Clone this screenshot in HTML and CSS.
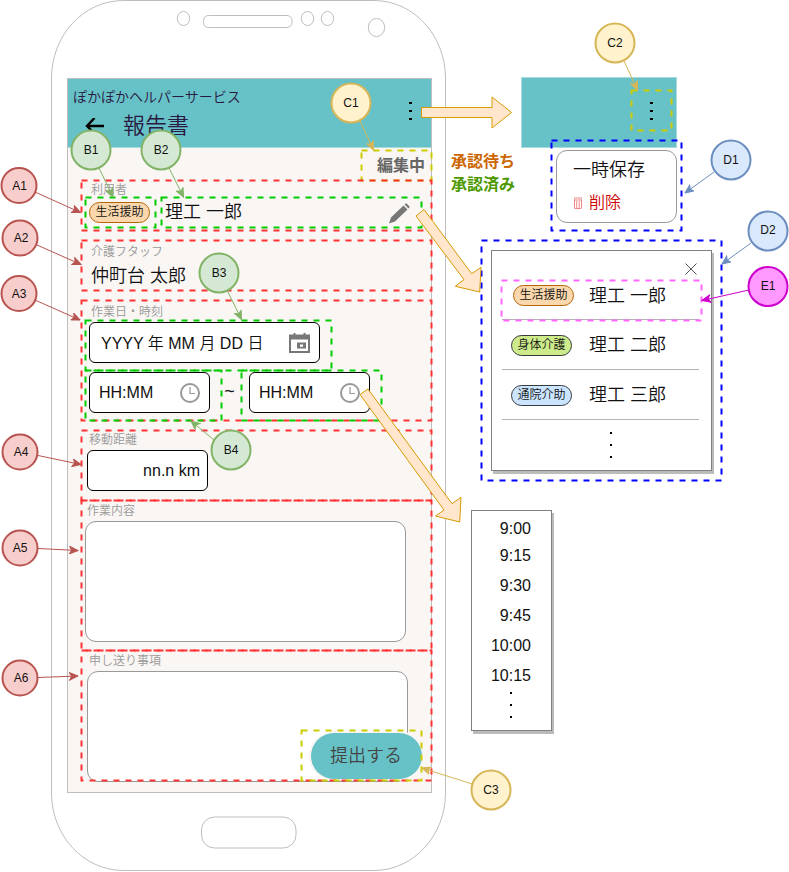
FILE: index.html
```html
<!DOCTYPE html>
<html lang="ja">
<head>
<meta charset="utf-8">
<title>報告書</title>
<link rel="stylesheet" href="styles.css">
</head>
<body>
<main class="canvas">
  <section class="phone">
    <svg class="phone-parts" viewBox="0 0 395 872" width="395" height="872">
      <path d="M72.500 .5H323C363 .5 394.500 36 394.500 78V793C394.500 835 363 870.500 323 870.500H72.500C32 870.500 .5 835 .5 793V78C.5 36 32 .5 72.500 .5Z"/>
      <ellipse cx="132.500" cy="18.500" rx="6.200" ry="7"/>
      <rect x="152.500" y="15.500" width="88.500" height="12" rx="5"/>
      <ellipse cx="256.500" cy="18.500" rx="6.200" ry="7"/>
      <ellipse cx="276.500" cy="18.500" rx="6.200" ry="7"/>
      <ellipse cx="325.500" cy="27.500" rx="8.200" ry="9"/>
      <rect x="150.500" y="817" width="94.500" height="31" rx="13"/>
    </svg>
    <div class="screen">
      <header class="app-bar">
        <div class="service">ぽかぽかヘルパーサービス</div>
        <div class="title-row">
          <svg class="back" width="20" height="16" viewBox="0 0 20 16"><path d="M19 8H2.500M9.500 0L2 8L9.500 15.500"/></svg>
          <h1>報告書</h1>
        </div>
        <div class="dots bar-dots"><i></i><i></i><i></i></div>
      </header>
      <div class="status">編集中</div>
      <section class="block user">
        <div class="label">利用者</div>
        <div class="user-row">
          <span class="tag orange">生活援助</span>
          <span class="name">理工 一郎</span>
          <svg class="pencil" width="21" height="21" viewBox="0 0 21 21"><path d="M0 20.500L2 14.500L14.500 2.500L18.500 6.500L6 18.500ZM15.500 1.600L17.300 .2L20.800 3.700L19.500 5.500Z"/></svg>
        </div>
      </section>
      <section class="block staff">
        <div class="label">介護フタッフ</div>
        <div class="name">仲町台 太郎</div>
      </section>
      <section class="block date">
        <div class="label">作業日・時刻</div>
        <div class="field date-field">
          <span>YYYY 年 MM 月 DD 日</span>
          <svg width="21" height="20" viewBox="0 0 21 20"><path fill="#777" fill-rule="evenodd" d="M0 1.500H4.500V0H6.500V1.500H14.500V0H16.500V1.500H21V20H0ZM2 6.500V18H19V6.500ZM8 9.500H17V15.500H8ZM11 11.500V13.700H14V11.500Z"/></svg>
        </div>
        <div class="times">
          <div class="field time-field"><span>HH:MM</span><svg class="clock" width="20" height="20" viewBox="0 0 20 20"><circle cx="10" cy="10" r="9"/><path d="M10 4V10.500H15"/></svg></div>
          <span class="tilde">~</span>
          <div class="field time-field"><span>HH:MM</span><svg class="clock" width="20" height="20" viewBox="0 0 20 20"><circle cx="10" cy="10" r="9"/><path d="M10 4V10.500H15"/></svg></div>
        </div>
      </section>
      <section class="block distance">
        <div class="label">移動距離</div>
        <div class="field km-field">nn.n km</div>
      </section>
      <section class="block work">
        <div class="label">作業内容</div>
        <div class="area"></div>
      </section>
      <section class="block notes">
        <div class="label">申し送り事項</div>
        <div class="area short"></div>
      </section>
      <div class="submit">提出する</div>
    </div>
  </section>

  <div class="states"><div class="waiting">承認待ち</div><div class="approved">承認済み</div></div>

  <div class="bar-sample"><div class="dots"><i></i><i></i><i></i></div></div>
  <div class="menu">
    <div>一時保存</div>
    <div class="delete"><svg width="8" height="12" viewBox="0 0 8 12"><path d="M0 1H8V3H0Z"/><path d="M.5 3V11.500M7.500 3V11.500M2.700 4V11.500M5.200 4V11.500M1 11.500H7"/></svg>削除</div>
  </div>

  <section class="picker">
    <svg class="close" width="12" height="12" viewBox="0 0 12 12"><path d="M.5 .5L11.500 11.500M11.500 .5L.5 11.500"/></svg>
    <div class="person first"><span class="tag orange">生活援助</span><span class="name">理工 一郎</span></div>
    <div class="person"><span class="tag green">身体介護</span><span class="name">理工 二郎</span></div>
    <div class="person"><span class="tag blue">通院介助</span><span class="name">理工 三郎</span></div>
    <div class="dots wide"><i></i><i></i><i></i></div>
  </section>

  <section class="time-list">
    <div>9:00</div><div>9:15</div><div>9:30</div><div>9:45</div><div>10:00</div><div>10:15</div>
    <div class="dots wide"><i></i><i></i><i></i></div>
  </section>

  <svg class="notes-layer" width="789" height="872" viewBox="0 0 789 872">
    <defs>
      <marker id="head" viewBox="0 0 9 8" refX="8.500" refY="4" markerWidth="9.500" markerHeight="8.500" orient="auto" markerUnits="userSpaceOnUse"><path d="M.5 .5L8.500 4L.5 7.500L2.500 4Z" fill="context-stroke" stroke="context-stroke"/></marker>
    </defs>
    <g class="frames">
      <g class="yellow">
        <rect x="361.500" y="150.500" width="70" height="30"/>
        <rect x="631.500" y="90.500" width="40" height="40"/>
      </g>
      <g class="red">
        <rect x="81.500" y="180.500" width="350" height="50"/>
        <rect x="81.500" y="240.500" width="350" height="50"/>
        <rect x="81.500" y="300.500" width="350" height="120"/>
        <rect x="81.500" y="430.500" width="350" height="70"/>
        <rect x="81.500" y="500.500" width="350" height="150"/>
        <rect x="81.500" y="650.500" width="350" height="130"/>
      </g>
      <g class="lime">
        <rect x="85.500" y="197.500" width="70" height="30"/>
        <rect x="161.500" y="197.500" width="260" height="30"/>
        <rect x="85.500" y="320.500" width="246" height="50"/>
        <rect x="85.500" y="370.500" width="136" height="50"/>
        <rect x="241.500" y="370.500" width="140" height="50"/>
      </g>
      <g class="yellow"><rect x="301.500" y="730.500" width="120" height="50"/></g>
      <g class="navy">
        <rect x="551.500" y="140.500" width="130" height="90"/>
        <rect x="481.500" y="240.500" width="240" height="240"/>
      </g>
      <g class="pink"><rect x="501.500" y="280.500" width="200" height="40"/></g>
    </g>
    <g class="block-arrows">
      <path d="M421.500 107.500H492V97L511.500 112.500L492 128V117.500H421.500Z"/>
      <path d="M416 216L424 209.500L471.700 273.700L481 267.300L479.700 292L455.300 286.300L464 279.500Z"/>
      <path d="M360 394.500L368 389L452 503.700L461 497.300L459.700 522L435.500 516L444 510Z"/>
    </g>
    <g class="pin a">
      <path d="M36 192.500L80.500 212.500"/><circle cx="19" cy="185.500" r="17.500"/><text x="19.500" y="189.500">A1</text>
      <path d="M37 245L81 264.500"/><circle cx="20" cy="238" r="17.500"/><text x="21" y="242">A2</text>
      <path d="M36 300.500L80 320"/><circle cx="19" cy="293.500" r="17.500"/><text x="19" y="297.500">A3</text>
      <path d="M38 455.500L81 464.500"/><circle cx="20" cy="452" r="17.500"/><text x="21" y="456">A4</text>
      <path d="M38 548.500L78 550.500"/><circle cx="20" cy="548" r="17.500"/><text x="20" y="552">A5</text>
      <path d="M38 677.500L78 676"/><circle cx="20" cy="678" r="17.500"/><text x="21" y="682">A6</text>
    </g>
    <g class="pin b">
      <path d="M99 168L113 197"/><circle cx="91" cy="150" r="19.500"/><text x="91" y="154">B1</text>
      <path d="M169 168L183.500 197"/><circle cx="161" cy="150" r="19.500"/><text x="161" y="154">B2</text>
      <path d="M227 290L241.500 319.500"/><circle cx="219" cy="273" r="19.500"/><text x="219" y="277">B3</text>
      <path d="M214 440L191 421"/><circle cx="231" cy="450" r="19.500"/><text x="231" y="454">B4</text>
    </g>
    <g class="pin c">
      <path d="M360 121L373.500 150"/><circle cx="351" cy="103" r="19.500"/><text x="351" y="107">C1</text>
      <path d="M624 61L637.500 90"/><circle cx="615" cy="43" r="19.500"/><text x="615" y="47">C2</text>
      <path d="M472 784L422 768"/><circle cx="491" cy="790" r="19.500"/><text x="491" y="794">C3</text>
    </g>
    <g class="pin d">
      <path d="M714 172L685 193"/><circle cx="731" cy="160" r="19.500"/><text x="731" y="164">D1</text>
      <path d="M751 243L722 264"/><circle cx="768" cy="231" r="19.500"/><text x="768" y="234">D2</text>
    </g>
    <g class="pin e">
      <path d="M749 290L702 300.500"/><circle cx="768" cy="286.500" r="19.500"/><text x="768" y="290">E1</text>
    </g>
  </svg>
</main>
</body>
</html>
```
FILE: styles.css
```css
* { box-sizing: border-box; }
body {
  margin: 0;
  background: #fff;
  color: #111;
  font-family: "Liberation Sans", "Noto Sans CJK JP", sans-serif;
  font-weight: 350;
}
.canvas { position: relative; width: 789px; height: 872px; overflow: hidden; }

/* phone */
.phone { position: absolute; left: 51px; top: 0; width: 395px; height: 872px; padding: 78px 0 0 16px; }
.phone-parts { position: absolute; left: 0; top: 0; fill: none; stroke: #bebebe; }
.screen { position: relative; width: 365px; height: 715px; border: 1px solid #bebebe; background: #faf6f4; }
.app-bar { position: relative; height: 69px; padding: 9px 0 0 5px; background: #67c2c8; color: #29183f; border-bottom: 1px solid #a9dadd; }
.service { font-size: 14px; line-height: 18px; }
.title-row { display: flex; align-items: center; gap: 18px; height: 32px; margin-top: 4px; padding-left: 12px; }
.title-row h1 { margin: 0; font-size: 22px; font-weight: 350; line-height: 32px; }
.back { fill: none; stroke: #000; stroke-width: 2.400; }
.dots { display: flex; flex-direction: column; align-items: center; gap: 6px; }
.dots i { width: 3px; height: 2px; background: #000; }
.dots.wide { gap: 10px; }
.dots.wide i { width: 2px; height: 2px; }
.bar-dots { position: absolute; right: 19px; top: 23px; }
.status { height: 32px; padding: 8px 6px 0 0; text-align: right; font-size: 16px; line-height: 20px; font-weight: 700; color: #666; }

.block { margin-left: 13px; }
.label { height: 18px; padding-left: 10px; font-size: 12px; line-height: 18px; color: #999; }
.name { font-size: 18px; line-height: 26px; white-space: nowrap; }
.user { height: 60px; }
.user .label { padding-top: 1px; }
.user-row { display: flex; align-items: center; height: 27px; padding: 0 21px 0 8px; }
.user-row .name { margin-left: 15px; }
.user-row .tag { position: relative; top: 1px; }
.pencil { margin-left: auto; margin-top: 4px; fill: #777; }
.tag { width: 61px; height: 21px; border: 1px solid #b46504; border-radius: 11px; font-size: 12px; line-height: 18px; text-align: center; flex: none; }
.orange { background: #fad7ac; }
.green { background: #cdeb8b; border-color: #36393d; }
.blue { background: #cce5ff; border-color: #36393d; }
.staff { height: 60px; padding-top: 3px; }
.staff .name { margin-top: 2px; padding-left: 10px; }
.date { height: 130px; padding-top: 3px; }
.field { height: 41px; border: 1px solid #000; border-radius: 6px; background: #fff; display: flex; align-items: center; font-size: 16px; }
.date-field { width: 231px; margin: 1px 0 0 8px; padding: 0 9px 0 11px; justify-content: space-between; }
.date-field span { position: relative; top: -1px; }
.times { display: flex; align-items: center; margin: 9px 0 0 8px; }
.time-field { width: 121px; padding: 0 9px; justify-content: space-between; }
.tilde { width: 39px; padding-bottom: 2px; text-align: center; font-size: 18px; }
.clock { fill: none; stroke: #999; stroke-width: 2; }
.clock path { stroke-width: 1.200; }
.distance { height: 70px; }
.distance .label { padding-left: 8px; padding-top: 1px; }
.km-field { width: 121px; margin: 2px 0 0 6px; padding-right: 7px; justify-content: flex-end; }
.work { height: 150px; }
.work .label { height: 19px; padding: 2px 0 0 6px; }
.area { width: 321px; height: 121px; margin: 2px 0 0 4px; border: 1px solid #999; border-radius: 11px; background: #fff; }
.notes .label { height: 19px; padding: 2px 0 0 8px; }
.area.short { height: 111px; margin-left: 6px; }
.submit { position: absolute; left: 243px; top: 654px; width: 111px; height: 46px; border-radius: 23px; background: #67c2c8; box-shadow: 0 0 0 2px #faf6f4; color: #444; font-size: 18px; line-height: 46px; text-align: center; padding-right: 1px; }

/* status variants */
.states { position: absolute; left: 451px; top: 150px; font-size: 16px; line-height: 23px; font-weight: 700; }
.waiting { color: #cc6600; }
.approved { color: #4d9900; }

/* overflow menu */
.bar-sample { position: absolute; left: 521px; top: 77px; width: 156px; height: 71px; padding: 24px 25px 0 0; border: 1px solid #a9dadd; background: #67c2c8; display: flex; justify-content: flex-end; align-items: flex-start; }
.bar-sample .dots { margin-right: -2px; }
.menu { position: absolute; left: 556px; top: 150px; width: 121px; height: 73px; padding: 6px 0 0 16px; border: 1px solid #999; border-radius: 11px; background: #fff; font-size: 18px; line-height: 26px; }
.delete { display: flex; align-items: center; gap: 7px; margin-top: 7px; padding-left: 1px; font-size: 16px; color: #cc0000; }
.delete svg { fill: none; stroke: #e88; stroke-width: 1; }

/* user picker */
.picker { position: absolute; left: 491px; top: 250px; width: 221px; height: 221px; padding: 12px 12px 0 10px; border: 1px solid #808080; background: #fff; box-shadow: 2px 3px 0 #bbb; }
.close { display: block; position: relative; left: -2px; margin-left: auto; stroke: #555; }
.person { display: flex; align-items: center; gap: 17px; height: 50px; padding: 2px 0 0 9px; border-bottom: 1px solid #b3b3b3; }
.person .name { position: relative; top: -1px; }
.person.first { height: 45px; padding: 0 0 3px 11px; gap: 15px; }
.person.first .name { top: 0; }
.picker .dots { margin-top: 12px; margin-left: 20px; }

/* time options */
.time-list { position: absolute; left: 471px; top: 510px; width: 81px; height: 221px; padding: 3px 20px 0 0; border: 1px solid #808080; background: #fff; box-shadow: 2px 3px 0 #bbb; font-size: 16px; line-height: 30px; text-align: right; }
.time-list div:first-child { height: 27px; }
.time-list .dots { padding-left: 18px; margin-top: 1px; }

/* annotations */
.notes-layer { position: absolute; left: 0; top: 0; }
.frames { fill: none; stroke-width: 2; stroke-dasharray: 6 6; }
.red { stroke: #ff3333; }
.lime { stroke: #00cc00; }
.yellow { stroke: #cccc00; }
.navy { stroke: #0000ff; }
.pink { stroke: #ff66ff; }
.block-arrows { fill: #ffe6cc; stroke: #d79b00; }
.pin > path { fill: none; marker-end: url(#head); }
.pin circle { stroke-width: 2; }
.pin text { stroke: none; fill: #111; font-size: 12px; text-anchor: middle; font-weight: 400; }
.pin.a { stroke: #b85450; fill: #f8cecc; }
.pin.b { stroke: #82b366; fill: #d5e8d4; }
.pin.c { stroke: #d6b656; fill: #fff2cc; }
.pin.d { stroke: #6c8ebf; fill: #dae8fc; }
.pin.e { stroke: #cc00cc; fill: #ff99ff; }
```
